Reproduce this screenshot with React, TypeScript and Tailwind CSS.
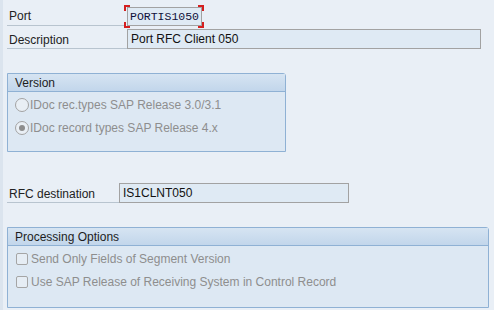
import React from 'react';

const sans = "font-['Liberation_Sans',Arial,sans-serif]";

function FieldLabel({ text, width }: { text: string; width: string }) {
  return (
    <div className={`${width} h-full flex items-center pt-[2px] pl-[2px] border-b border-[#b8c4cf] text-[12px] text-[#222]`}>
      {text}
    </div>
  );
}

function Group({ title, width, height, children }: { title: string; width: string; height: string; children: React.ReactNode }) {
  return (
    <div className={`${width} ${height} flex flex-col border border-[#8fb1d4] rounded-tr-[3px] bg-[#dde8f3]`}>
      <div className="h-[18px] shrink-0 flex items-center pl-[7px] border-b border-[#8fb1d4] bg-gradient-to-b from-[#d6e4f2] to-[#c2d6eb] text-[12px] text-[#1d1d1d]">
        {title}
      </div>
      <div className="flex flex-col pt-[2px] pl-[8px] gap-[1px]">{children}</div>
    </div>
  );
}

function Radio({ label, checked }: { label: string; checked?: boolean }) {
  return (
    <div className="h-[22px] flex items-center">
      <span className="w-[14px] h-[14px] rounded-full border border-[#a3a3a3] bg-[#e9eff5] flex items-center justify-center mr-[1px] -ml-[1px]">
        {checked && <span className="w-[6px] h-[6px] rounded-full bg-[#8d8d8d]" />}
      </span>
      <span className="text-[12px] text-[#8e8e8e]">{label}</span>
    </div>
  );
}

function Check({ label }: { label: string }) {
  return (
    <div className="h-[22px] flex items-center">
      <span className="w-[12px] h-[12px] rounded-[2px] border border-[#a5a5a5] bg-[#e6edf4] mr-[3px]" />
      <span className="text-[12px] text-[#8e8e8e]">{label}</span>
    </div>
  );
}

export default function App() {
  return (
    <div className={`w-[494px] h-[310px] flex bg-[#e9eff6] overflow-hidden ${sans}`}>
      <div className="w-[3px] h-full bg-[#dbe4ee]" />
      <div className="flex flex-col pl-[4px] pt-[5px]">
        {/* Port */}
        <div className="h-[21px] flex">
          <FieldLabel text="Port" width="w-[117px]" />
          <div className="relative w-[80px] h-[23px] p-[2px] pl-[3px]">
            <div className="w-full h-[19px] border border-[#a2a2a2] bg-[#dfeaf4] flex items-center pl-[2px] font-['Liberation_Mono','Courier_New',monospace] text-[11.5px] text-[#10103a]">
              PORTIS1050
            </div>
            <span className="absolute left-0 top-0 w-[6px] h-[6px] border-l-2 border-t-2 border-[#d41f1f]" />
            <span className="absolute right-0 top-0 w-[6px] h-[6px] border-r-2 border-t-2 border-[#d41f1f]" />
            <span className="absolute left-0 bottom-0 w-[6px] h-[6px] border-l-2 border-b-2 border-[#d41f1f]" />
            <span className="absolute right-0 bottom-0 w-[6px] h-[6px] border-r-2 border-b-2 border-[#d41f1f]" />
          </div>
        </div>

        {/* Description */}
        <div className="h-[20px] flex mt-[3px]">
          <FieldLabel text="Description" width="w-[120px]" />
          <div className="w-[354px] h-[20px] border border-[#a2a2a2] bg-[#dfeaf4] flex items-center pl-[3px] text-[12px] text-[#111]">
            Port RFC Client 050
          </div>
        </div>

        {/* Version */}
        <div className="mt-[24px]">
          <Group title="Version" width="w-[279px]" height="h-[79px]">
            <Radio label="IDoc rec.types SAP Release 3.0/3.1" />
            <Radio label="IDoc record types SAP Release 4.x" checked />
          </Group>
        </div>

        {/* RFC destination */}
        <div className="h-[20px] flex mt-[31px]">
          <FieldLabel text="RFC destination" width="w-[112px]" />
          <div className="w-[230px] h-[20px] border border-[#a2a2a2] bg-[#dfeaf4] flex items-center pl-[3px] text-[12px] text-[#111]">
            IS1CLNT050
          </div>
        </div>

        {/* Processing Options */}
        <div className="mt-[24px]">
          <Group title="Processing Options" width="w-[482px]" height="h-[81px]">
            <Check label="Send Only Fields of Segment Version" />
            <Check label="Use SAP Release of Receiving System in Control Record" />
          </Group>
        </div>
      </div>
    </div>
  );
}
